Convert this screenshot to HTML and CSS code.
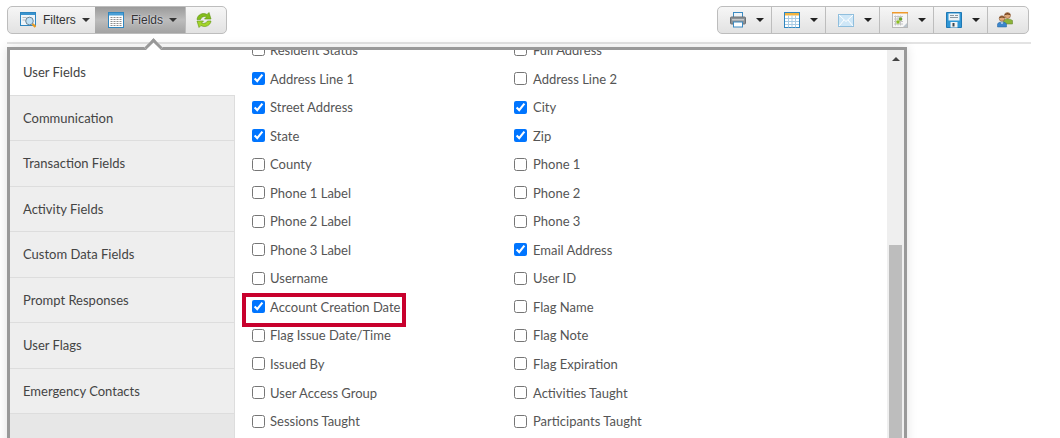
FILE: index.html
```html
<!DOCTYPE html>
<html lang="en">
<head>
<meta charset="utf-8">
<title>Fields</title>
<link rel="stylesheet" href="styles.css">
</head>
<body>
<header class="toolbar">
  <div class="group">
    <button class="btn btn-filters">
      <svg class="ico" viewBox="0 0 16 16"><rect x=".5" y=".5" width="15" height="13" fill="#eef5fa" stroke="#2f86c0"/><rect x="1" y="1" width="14" height="2" fill="#3a94cf"/><rect x="2.5" y="5" width="4" height="1" fill="#bbb"/><rect x="2.5" y="7.500" width="3" height="1" fill="#bbb"/><circle cx="9.500" cy="9" r="3.800" fill="#bfe0f5" stroke="#6d8494"/><path d="M12.500 12l3 3" stroke="#e59a22" stroke-width="2.400"/></svg>
      <span>Filters</span><i class="arrow"></i>
    </button>
    <button class="btn btn-fields">
      <svg class="ico" viewBox="0 0 16 16"><rect x=".5" y=".5" width="15" height="15" fill="#fff" stroke="#2f86c0"/><rect x="1" y="1" width="14" height="2.500" fill="#4a9fd6"/><path d="M2.500 5.500h11M2.500 7.500h11M2.500 9.500h11M2.500 11.500h11M2.500 13.500h11" stroke="#8f8f8f" stroke-dasharray="2 1"/></svg>
      <span>Fields</span><i class="arrow"></i>
    </button>
    <button class="btn btn-refresh">
      <svg class="ico" viewBox="0 0 16 16"><path d="M1 7.500C1.500 2.500 7 0 11 2.500L13 .5 15 7H8.500L10.500 5C8 3.800 5.500 5 4.500 7.500z" fill="#84bd1c" stroke="#5f9412" stroke-width=".6"/><path d="M15 9C14.500 13.500 9 16 5 13.500L3 15.500 1 9H7.500L5.500 11C8 12.200 10.500 11 11.500 9z" fill="#a3d42a" stroke="#5f9412" stroke-width=".6"/></svg>
    </button>
  </div>
  <div class="group">
    <button class="btn btn-tool">
      <svg class="ico" viewBox="0 0 16 16"><rect x="3.500" y=".5" width="9" height="5" fill="#eef4f8" stroke="#3b8ac2"/><rect x=".5" y="5" width="15" height="7" rx="1" fill="#8d9296" stroke="#6c7175"/><rect x="2" y="7" width="12" height="1.500" fill="#c5c8ca"/><rect x="3.500" y="10" width="9" height="5" fill="#fff" stroke="#3b8ac2"/></svg>
      <i class="arrow arrow-dark"></i>
    </button>
    <button class="btn btn-tool">
      <svg class="ico" viewBox="0 0 16 16"><rect x=".5" y=".5" width="15" height="15" fill="#fff" stroke="#2f86c0"/><rect x="1" y="1" width="14" height="2.500" fill="#f3b43f"/><path d="M1 6.500h14M1 9.500h14M1 12.500h14M4.500 3.500v12M8 3.500v12M11.500 3.500v12" stroke="#a9cbe3"/></svg>
      <i class="arrow arrow-dark"></i>
    </button>
    <button class="btn btn-tool">
      <svg class="ico ico-wide" viewBox="0 0 16 13"><rect x=".5" y=".5" width="15" height="12" fill="#cfe7f7" stroke="#8fbedd"/><path d="M1 1l7 6.500L15 1M1 12l5-6M15 12l-5-6" fill="none" stroke="#fff"/></svg>
      <i class="arrow arrow-dark"></i>
    </button>
    <button class="btn btn-tool">
      <svg class="ico" viewBox="0 0 16 16"><rect x=".5" y=".5" width="15" height="15" fill="#f7f7f7" stroke="#b8b8b8"/><rect x="0" y="0" width="16" height="1.500" fill="#ef9a2c"/><path d="M2 4.500h9M2 7h9M2 9.500h9M2 12h9M3.500 3.500v10M6 3.500v10M8.500 3.500v10" stroke="#c4c4c4"/><rect x="7" y="5.500" width="3" height="3" fill="#69a62a"/><rect x="4.500" y="8.500" width="3" height="3" fill="#8cc11f"/><path d="M11 15l4-4v4z" fill="#b9c3cb"/></svg>
      <i class="arrow arrow-dark"></i>
    </button>
    <button class="btn btn-tool">
      <svg class="ico" viewBox="0 0 16 16"><path d="M.5.500h15v15H.5z" fill="#2f97d6" stroke="#1f78b4"/><rect x="2.500" y="1.500" width="11" height="7" fill="#eef3f6"/><path d="M4 3.500h4M9 3.500h3M4 5.500h8" stroke="#8a97a1"/><rect x="4.500" y="10" width="7" height="5.500" fill="#f4f4f4"/><rect x="6.500" y="11" width="2" height="3.500" fill="#3a4750"/></svg>
      <i class="arrow arrow-dark"></i>
    </button>
    <button class="btn btn-users">
      <svg class="ico" viewBox="0 0 16 16"><circle cx="10.500" cy="3.500" r="3" fill="#e0a878" stroke="#7a4a26" stroke-width=".5"/><path d="M7.500 2.500Q10.500-.5 13.500 2.500L13 3Q10.500 1.800 8 3z" fill="#6b3d1c"/><path d="M6.500 11V8.500Q7 7 10.500 7T15.500 8.500V12H6.500z" fill="#8cb43a" stroke="#5d7f22" stroke-width=".5"/><circle cx="5" cy="6.500" r="2.800" fill="#e0a878" stroke="#7a4a26" stroke-width=".5"/><path d="M2.200 5.500Q5 3 7.800 5.500L7.400 6Q5 5 2.600 6z" fill="#6b3d1c"/><path d="M.5 15V12Q1 10 5 10T9.500 12V15z" fill="#3c86cc" stroke="#20609e" stroke-width=".5"/><path d="M3.500 10.500L5 12l1.500-1.500" fill="#fff"/></svg>
    </button>
  </div>
</header>
<div class="rule"></div>
<main class="panel">
  <i class="notch"></i>
  <nav class="tabs">
    <a class="tab active">User Fields</a>
    <a class="tab">Communication</a>
    <a class="tab">Transaction Fields</a>
    <a class="tab">Activity Fields</a>
    <a class="tab">Custom Data Fields</a>
    <a class="tab">Prompt Responses</a>
    <a class="tab">User Flags</a>
    <a class="tab">Emergency Contacts</a>
  </nav>
  <section class="fields">
    <div class="list">
      <label class="field"><input type="checkbox"><span>Resident Status</span></label>
      <label class="field"><input type="checkbox"><span>Full Address</span></label>
      <label class="field"><input type="checkbox" checked><span>Address Line 1</span></label>
      <label class="field"><input type="checkbox"><span>Address Line 2</span></label>
      <label class="field"><input type="checkbox" checked><span>Street Address</span></label>
      <label class="field"><input type="checkbox" checked><span>City</span></label>
      <label class="field"><input type="checkbox" checked><span>State</span></label>
      <label class="field"><input type="checkbox" checked><span>Zip</span></label>
      <label class="field"><input type="checkbox"><span>County</span></label>
      <label class="field"><input type="checkbox"><span>Phone 1</span></label>
      <label class="field"><input type="checkbox"><span>Phone 1 Label</span></label>
      <label class="field"><input type="checkbox"><span>Phone 2</span></label>
      <label class="field"><input type="checkbox"><span>Phone 2 Label</span></label>
      <label class="field"><input type="checkbox"><span>Phone 3</span></label>
      <label class="field"><input type="checkbox"><span>Phone 3 Label</span></label>
      <label class="field"><input type="checkbox" checked><span>Email Address</span></label>
      <label class="field"><input type="checkbox"><span>Username</span></label>
      <label class="field"><input type="checkbox"><span>User ID</span></label>
      <label class="field"><input type="checkbox" checked><span>Account Creation Date</span></label>
      <label class="field"><input type="checkbox"><span>Flag Name</span></label>
      <label class="field"><input type="checkbox"><span>Flag Issue Date/Time</span></label>
      <label class="field"><input type="checkbox"><span>Flag Note</span></label>
      <label class="field"><input type="checkbox"><span>Issued By</span></label>
      <label class="field"><input type="checkbox"><span>Flag Expiration</span></label>
      <label class="field"><input type="checkbox"><span>User Access Group</span></label>
      <label class="field"><input type="checkbox"><span>Activities Taught</span></label>
      <label class="field"><input type="checkbox"><span>Sessions Taught</span></label>
      <label class="field"><input type="checkbox"><span>Participants Taught</span></label>
    </div>
    <div class="scrollbar"><i class="up"></i><i class="thumb"></i></div>
    <i class="highlight"></i>
  </section>
</main>
</body>
</html>
```

FILE: styles.css
```css
* { box-sizing: border-box; }
html, body { margin: 0; height: 438px; overflow: hidden; background: #fff; }
body { font-family: "Lato", sans-serif; color: #555; position: relative; }

.toolbar { display: flex; justify-content: space-between; padding: 6px 31px 0 7px; height: 34px; }
.group { display: flex; height: 28px; border: 1px solid #bdbdbd; border-radius: 5px; overflow: hidden; background: linear-gradient(#f6f6f6, #e2e2e2); }
.btn { display: flex; align-items: center; border: 0; padding: 0; margin: 0; background: none; font: 12px "Liberation Sans", sans-serif; color: #333; border-left: 1px solid #bdbdbd; }
.btn:first-child { border-left: 0; }
.btn-filters { width: 87px; padding-left: 12px; }
.btn-fields { width: 90px; padding-left: 13px; border-left: 0; background: linear-gradient(#9b9b9b, #bcbcbc 50%, #a3a3a3); text-shadow: 0 0 2px #eef; }
.btn-refresh { width: 41px; padding-left: 10px; }
.btn-tool { width: 54px; padding-left: 12px; }
.btn-tool:first-child { width: 53px; }
.btn-users { width: 41px; padding-left: 9px; }
.btn-filters span { margin-left: 7px; }
.btn-fields span { margin-left: 7px; }
.ico { width: 16px; height: 16px; flex: none; }
.ico-wide { height: 13px; }
.arrow { width: 0; height: 0; border: 4px solid transparent; border-top-color: #333; border-bottom: 0; margin-left: 6px; }
.arrow-dark { margin-left: 10px; border-top-color: #222; }

.rule { height: 2px; margin: 8px 29px 0 7px; background: #e3e3e3; }

.panel { position: relative; display: flex; width: 900px; height: 420px; margin: 3px 0 0 7px; border: 3px solid #999; background: #fff; box-shadow: 0 0 10px rgba(0, 0, 0, .12); }
.notch { position: absolute; left: 136.5px; top: -9px; width: 13px; height: 13px; background: #fff; border-top: 3px solid #999; border-left: 3px solid #999; transform: rotate(45deg); }

.tabs { width: 225px; flex: none; background: #e7e7e7; border-right: 1px solid #ddd; }
.tab { display: flex; align-items: center; height: 45.5px; padding-left: 13px; font-size: 13px; color: #444; background: #eee; border-bottom: 1px solid #ddd; }
.tab.active { background: #fff; border-bottom-color: #ddd; margin-right: -1px; position: relative; }

.fields { flex: 1; position: relative; display: flex; overflow: hidden; }
.list { flex: 1; display: grid; grid-template-columns: 262px 262px; grid-auto-rows: 28.55px; align-content: start; padding-left: 17px; margin-top: -14.3px; }
.field { display: flex; align-items: center; font-size: 13px; color: #555; }
.field input { width: 13px; height: 13px; margin: 0 5px 0 0; flex: none; }
.field:nth-child(even) input { margin-right: 6px; }
.scrollbar { width: 17px; flex: none; background: #efefef; padding: 7px 2px 0; }
.up { display: block; width: 0; height: 0; margin: 0 auto; border: 4px solid transparent; border-bottom-color: #444; border-top: 0; }
.thumb { display: block; height: 240px; margin-top: 184px; background: #bdbdbd; }
.highlight { position: absolute; left: 7px; top: 243px; width: 164px; height: 34px; border: 4px solid #c8002d; }
```
